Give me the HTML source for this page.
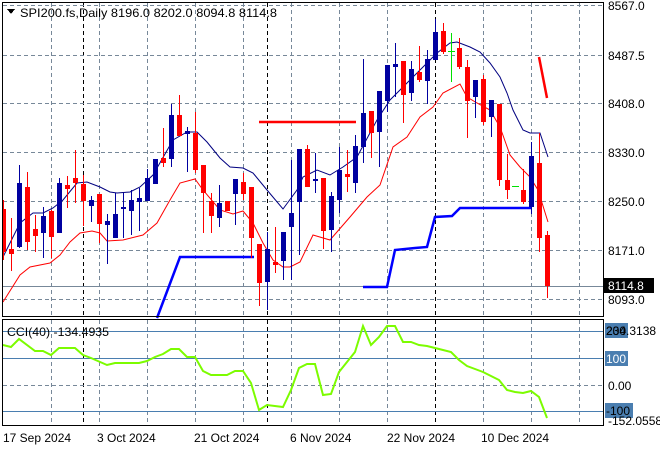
<!DOCTYPE html>
<html><head><meta charset="utf-8">
<style>
html,body{margin:0;padding:0;background:#fff;}
body{width:660px;height:450px;overflow:hidden;font-family:"Liberation Sans","DejaVu Sans",sans-serif;}
svg text{font-family:"Liberation Sans","DejaVu Sans",sans-serif;font-size:12px;}
</style></head><body>
<svg id="s" width="660" height="450" xmlns="http://www.w3.org/2000/svg" shape-rendering="crispEdges">
<rect width="660" height="450" fill="#fff"/>
<g id="grid"></g>
<line x1="3" y1="331.5" x2="603" y2="331.5" stroke="#4a7eb0"/>
<line x1="3" y1="358.5" x2="603" y2="358.5" stroke="#4a7eb0"/>
<line x1="3" y1="385.5" x2="603" y2="385.5" stroke="#778899" stroke-dasharray="4,3"/>
<line x1="3" y1="411.5" x2="603" y2="411.5" stroke="#4a7eb0"/>
<line x1="3" y1="286.5" x2="603" y2="286.5" stroke="#778899"/>
<g id="lines"></g>
<g id="candles"></g>
<rect x="2.5" y="2.5" width="601" height="314" fill="none" stroke="#000"/>
<rect x="2.5" y="319.5" width="601" height="106" fill="none" stroke="#000"/>
<polygon points="7,9 15,9 11,14" fill="#000"/>
<text x="20" y="17" textLength="257" lengthAdjust="spacingAndGlyphs">SPI200.fs,Daily  8196.0 8202.0 8094.8 8114.8</text>
<text x="7" y="336" textLength="102" lengthAdjust="spacingAndGlyphs">CCI(40) -134.4935</text>
<g font-size="12">
<text x="608" y="10">8567.0</text>
<text x="608" y="60">8487.5</text>
<text x="608" y="108">8408.0</text>
<text x="608" y="157">8330.0</text>
<text x="608" y="206">8250.0</text>
<text x="608" y="255">8171.0</text>
<rect x="604" y="278" width="50" height="15" fill="#000"/>
<text x="608" y="290" fill="#fff">8114.8</text>
<text x="608" y="304">8093.0</text>
<rect x="605" y="323" width="23" height="15" fill="#4a7eb0"/>
<text x="606" y="335">200</text>
<text x="606" y="335">234.3138</text>
<rect x="605" y="351" width="23" height="15" fill="#4a7eb0"/>
<text x="606" y="363" fill="#fff">100</text>
<text x="608" y="390">0.00</text>
<rect x="605" y="403" width="28" height="15" fill="#4a7eb0"/>
<text x="606" y="415">-100</text>
<text x="608" y="425">-152.0558</text>
</g>
<g font-size="12">
<text x="3" y="442">17 Sep 2024</text>
<text x="97" y="442">3 Oct 2024</text>
<text x="194" y="442">21 Oct 2024</text>
<text x="290" y="442">6 Nov 2024</text>
<text x="387" y="442">22 Nov 2024</text>
<text x="481" y="442">10 Dec 2024</text>
</g>
</svg>
<script>
var NS="http://www.w3.org/2000/svg";
function el(p,t,a){var e=document.createElementNS(NS,t);for(var k in a)e.setAttribute(k,a[k]);p.appendChild(e);return e;}
var g=document.getElementById('grid');
var xs=[51,99,147,195,243,291,339,387,435,483,531,579];
var blk=[83,267,435];
xs.forEach(function(x){if(blk.indexOf(x)<0){el(g,'line',{x1:x+.5,y1:3,x2:x+.5,y2:316,stroke:'#778899','stroke-dasharray':'4,3'});el(g,'line',{x1:x+.5,y1:320,x2:x+.5,y2:425,stroke:'#778899','stroke-dasharray':'4,3'});}});
blk.forEach(function(x){el(g,'line',{x1:x+.5,y1:3,x2:x+.5,y2:316,stroke:'#000','stroke-dasharray':'4,3'});el(g,'line',{x1:x+.5,y1:320,x2:x+.5,y2:425,stroke:'#000','stroke-dasharray':'4,3'});});
[5,55,103,152,201,250,299].forEach(function(y){el(g,'line',{x1:3,y1:y+.5,x2:603,y2:y+.5,stroke:'#778899','stroke-dasharray':'4,3'});});
var L=document.getElementById('lines');
function pl(pts,c,w){el(L,'polyline',{points:pts,fill:'none',stroke:c,'stroke-width':w,'shape-rendering':'auto'});}
pl("3,257 20,223 33,213 43,213 53,208 63,200 77,183 87,182 100,187 110,192 117,193 130,192 140,187 153,175 173,140 187,132 197,132 207,142 220,158 230,167 243,168 253,173 267,190 283,209 297,190 303,177 317,170 330,175 343,167 357,157 377,120 390,100 400,90 413,77 423,67 437,53 450,43 457,42 470,47 480,52 490,63 500,77 507,93 513,110 523,130 530,133 540,133 548,157","#000080",1);
pl("3,302 20,275 30,267 50,263 60,255 70,242 80,233 92,231 100,233 107,241 123,240 143,235 157,223 170,200 180,183 195,179 203,190 220,210 233,214 243,211 253,223 263,243 273,260 283,267 290,267 300,262 313,235 330,240 350,217 367,197 380,185 393,147 407,137 420,117 433,107 443,93 460,84 467,97 477,103 490,110 500,127 510,155 520,167 530,177 538,190 548,222","#ff0000",1);
pl("157,318 180,257 254,257","#0000ff",2.5);
pl("363,287 387,287 395,250 415,248 427,247 435,217 452,216 460,208 531,208","#0000ff",2.5);
pl("259,122 356,122","#ff0000",2.5);
pl("539,57 547,98","#ff0000",2.5);
pl("3,345 11,347 19,339 35,351 43,351 51,355 59,348 75,348 83,355 91,358 107,365 115,363 139,363 147,361 155,357 163,354 171,349 179,349 187,357 195,357 203,371 211,375 227,375 235,371 243,371 251,383 259,410 267,405 283,407 291,390 299,368 307,364 315,364 323,395 331,394 339,372 347,362 355,352 363,326 371,345 379,337 387,326 395,326 403,342 411,342 419,345 427,346 435,348 443,350 451,352 459,360 467,366 475,369 483,372 491,376 499,380 507,390 515,392 523,393 531,391 539,397 547,418","#7cfc00",2);
var D=[[200,209,252,260,'r'],[218,249,254,271,'r'],[165,183,247,248,'b'],[172,187,242,250,'r'],[215,229,236,252,'r'],[207,216,233,258,'b'],[210,211,237,258,'r'],[178,183,233,233,'b'],[176,185,189,208,'r'],[150,178,183,203,'r'],[175,184,201,226,'r'],[196,200,206,222,'b'],[194,194,224,243,'r'],[214,221,225,264,'b'],[193,214,238,238,'b'],[193,207,209,238,'b'],[190,200,211,235,'b'],[188,198,202,231,'b'],[169,178,201,201,'b'],[159,159,184,184,'b'],[128,158,163,167,'r'],[104,115,159,167,'b'],[95,115,136,136,'r'],[127,131,134,172,'b'],[112,133,170,173,'r'],[165,165,193,233,'r'],[193,201,216,233,'r'],[185,203,218,227,'b'],[201,201,211,211,'r'],[179,179,194,225,'b'],[173,182,194,200,'r'],[187,187,238,258,'r'],[244,244,283,306,'r'],[232,249,282,310,'b'],[227,262,265,273,'r'],[232,232,261,280,'b'],[160,213,227,280,'b'],[149,149,202,255,'b'],[145,149,187,187,'r'],[153,179,181,193,'b'],[178,178,231,249,'r'],[192,196,230,252,'b'],[147,170,200,213,'b'],[150,174,177,192,'r'],[135,146,183,193,'b'],[59,113,147,163,'b'],[111,111,133,158,'r'],[91,91,132,167,'b'],[65,65,101,112,'b'],[43,64,67,97,'b'],[61,61,95,123,'r'],[61,69,93,101,'b'],[46,72,80,82,'r'],[50,59,81,104,'b'],[19,32,60,60,'b'],[23,31,52,54,'r'],[33,51,51,82,'g'],[38,48,67,69,'r'],[60,67,101,138,'r'],[80,80,97,118,'b'],[75,79,122,125,'r'],[100,100,117,137,'b'],[104,104,180,186,'r'],[154,180,190,199,'r'],[186,186,186,186,'g'],[169,190,202,204,'r'],[142,156,207,214,'b'],[133,163,238,252,'r'],[231,235,286,298,'r']];
var C=document.getElementById('candles');
var col={r:'#ff0000',b:'#0000a0',g:'#00e000'};
D.forEach(function(d,i){var x=3+8*i;var c=col[d[4]];
el(C,'rect',{x:x,y:d[0],width:1,height:Math.max(1,d[3]-d[0]),fill:c});
if(d[4]=='g'){el(C,'rect',{x:x-3,y:d[1],width:7,height:1,fill:c});}
else{var bx=Math.max(3,x-2);el(C,'rect',{x:bx,y:d[1],width:x+3-bx,height:Math.max(2,d[2]-d[1]),fill:c});}
});
</script>
</body></html>
